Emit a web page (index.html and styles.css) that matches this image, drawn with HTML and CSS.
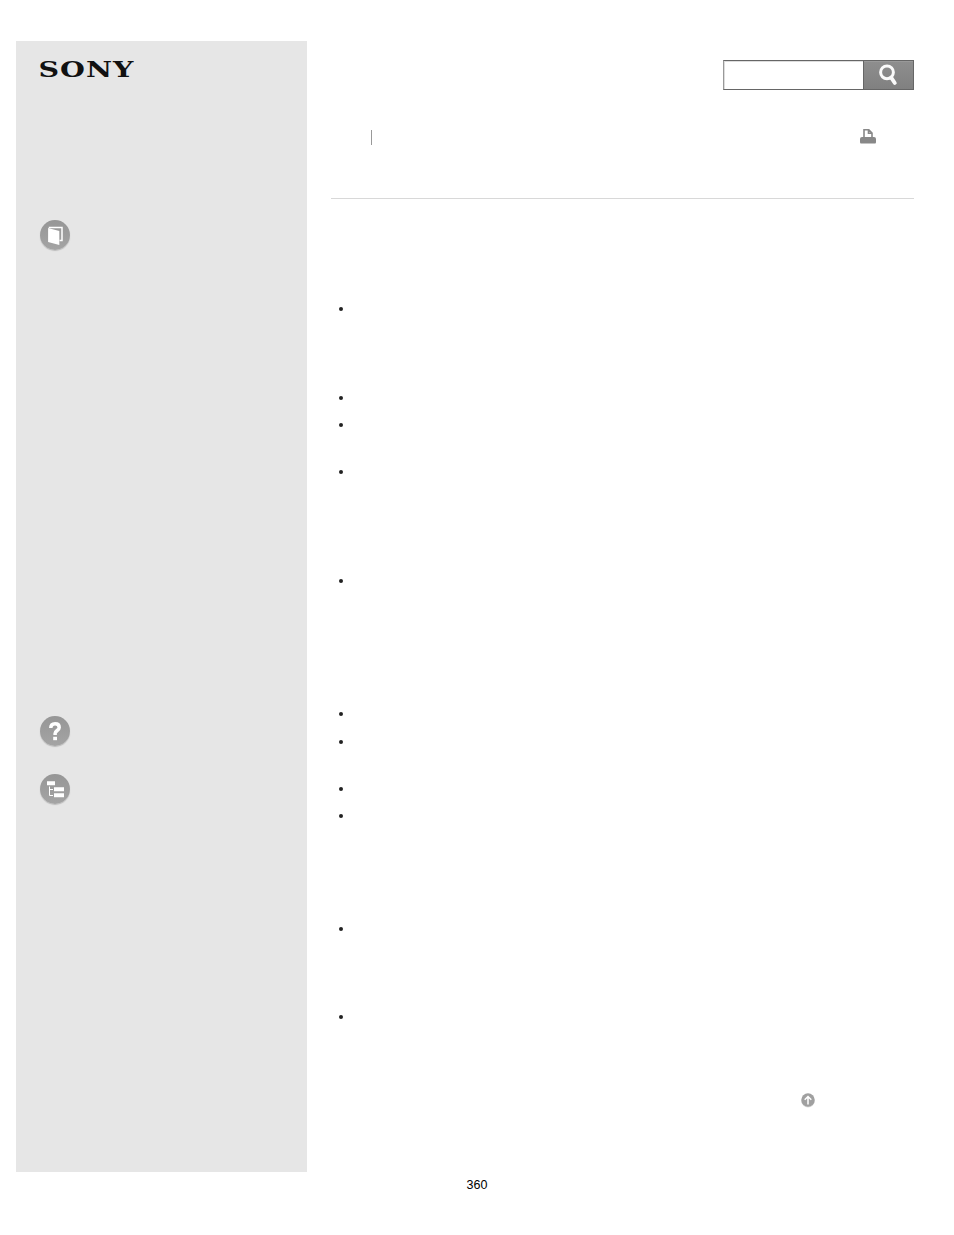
FILE: index.html
```html
<!DOCTYPE html>
<html lang="en">

<head>
  <meta charset="UTF-8">
  <title>SONY</title>
  <link rel="stylesheet" href="styles.css">
</head>

<body>
  <div class="wrapper">
    <div class="side">
      <svg class="logo" width="110" height="32" viewBox="0 0 110 32">
        <text x="-0.6" y="23.2" textLength="96" lengthAdjust="spacingAndGlyphs">SONY</text>
      </svg>

      <div class="side-icon guide">
        <svg width="30" height="30" viewBox="0 0 30 30">
          <path d="M8.8 7.5H22V20.5H19.5" fill="none" stroke="#fff" stroke-width="1.5" />
          <path d="M8.1 8L19.3 11V25L8.1 22Z" fill="#fff" />
        </svg>
      </div>
      <div class="side-icon faq">
        <svg width="30" height="30" viewBox="0 0 30 30">
          <path d="M10.8 12C10.8 9 12.4 7.7 15.1 7.7C17.8 7.7 19.2 9.2 19.2 11.4C19.2 14.4 15.1 14.6 15.1 17.5V19" fill="none" stroke="#fff" stroke-width="3.5" />
          <rect x="13.2" y="20.8" width="3.8" height="3.4" fill="#fff" />
        </svg>
      </div>
      <div class="side-icon list">
        <svg width="30" height="30" viewBox="0 0 30 30">
          <path d="M7 7.2H15V11.2H7ZM14 13.3H24V17.3H14ZM14 19.3H24V23.3H14Z" fill="#fff" />
          <path d="M9.5 12.5V21.5H13M9.5 15.5H13" fill="none" stroke="#fff" />
        </svg>
      </div>
    </div>

    <div class="main">
      <form class="search">
        <input type="text" aria-label="Search">
        <button type="button" aria-label="Search">
          <svg width="20" height="22" viewBox="0 0 20 22">
            <circle cx="8" cy="8.3" r="6.4" fill="none" stroke="#fafafa" stroke-width="3" />
            <path d="M12.2 13.6L15.8 19" stroke="#fafafa" stroke-width="3.8" stroke-linecap="round" />
          </svg>
        </button>
      </form>

      <div class="tools">
        <span class="divider"></span>
        <svg class="print" width="16" height="16" viewBox="0 0 16 16">
          <path d="M4 9V1.7H8.8L12 5V9M8.5 2V5.3H12" fill="none" stroke="#888" stroke-width="1.6" />
          <path d="M2 9H14Q16 9 16 11V14Q16 15.5 15 15.5H1Q0 15.5 0 14V11Q0 9 2 9Z" fill="#888" />
        </svg>
      </div>

      <div class="content">
        <ul>
          <li></li>
        </ul>
        <ul class="notes">
          <li></li>
          <li class="double"></li>
          <li></li>
        </ul>
        <ul class="hint">
          <li></li>
        </ul>
        <ul class="steps">
          <li></li>
          <li class="double"></li>
          <li></li>
          <li></li>
        </ul>
        <ul class="details">
          <li></li>
        </ul>
        <ul class="related">
          <li></li>
        </ul>
      </div>

      <div class="to-top">
        <svg width="14" height="15" viewBox="0 0 14 15">
          <circle cx="7" cy="7.8" r="6.8" fill="#ddd" />
          <circle cx="7" cy="7" r="6.7" fill="#a0a0a0" />
          <path d="M7 11.5V3.7M3.7 6.8L7 3.5L10.3 6.8" fill="none" stroke="#fff" stroke-width="1.5" />
        </svg>
      </div>
    </div>
  </div>

  <div class="page-number">360</div>
</body>

</html>
```

FILE: styles.css
```css
body {
  margin: 0;
  background-color: #fff;
  font-family: "Liberation Sans", Arial, sans-serif;
}

.wrapper {
  display: flex;
  width: 898px;
  height: 1131px;
  margin: 41px 0 0 16px;
}

.side {
  display: flex;
  flex-direction: column;
  box-sizing: border-box;
  width: 291px;
  padding: 13px 0 0 23px;
  background-color: #e6e6e6;
}

.logo {
  display: block;
  overflow: visible;
}

.logo text {
  font-family: "DejaVu Serif", serif;
  font-size: 22.5px;
  font-weight: bold;
  letter-spacing: 0.8px;
  fill: #111;
}

.side-icon {
  width: 30px;
  height: 30px;
  margin-left: 1px;
  border-radius: 50%;
  background: linear-gradient(#969696, #a4a4a4);
  box-shadow: 0 1px 1px #bbb;
}

.side-icon svg {
  display: block;
}

.guide {
  margin-top: 134px;
}

.faq {
  margin-top: 466px;
}

.list {
  margin-top: 28px;
}

.main {
  width: 583px;
  margin-left: 24px;
  padding-top: 19px;
}

.search {
  display: flex;
  justify-content: flex-end;
  height: 30px;
}

.search input {
  box-sizing: border-box;
  width: 140px;
  padding: 0 6px;
  border: 1px solid #666;
  border-left-color: #999;
  border-right: none;
  border-radius: 0;
  box-shadow: inset 1px 1px 0 #ddd;
}

.search button {
  box-sizing: border-box;
  width: 51px;
  padding: 0 0 0 15px;
  border: 1px solid #666;
  background: linear-gradient(#8e8e8e, #808080);
  box-shadow: inset 0 1px 0 #999;
}

.search svg {
  display: block;
}

.tools {
  display: flex;
  justify-content: space-between;
  box-sizing: border-box;
  height: 109px;
  padding: 38px 38px 0 40px;
  border-bottom: 1px solid #d8d8d8;
}

.divider {
  width: 1px;
  height: 15px;
  margin-top: 2px;
  background-color: #999;
}

.content {
  padding-top: 100.4px;
}

ul {
  margin: 0;
  padding: 0 0 0 8px;
  list-style: none;
}

li {
  display: flex;
  height: 20px;
}

li + li {
  margin-top: 7.3px;
}

li.double {
  height: 40px;
}

li::before {
  content: "";
  width: 4px;
  height: 4px;
  margin-top: 8px;
  border-radius: 50%;
  background-color: #222;
}

.notes {
  margin-top: 68.5px;
}

.hint {
  margin-top: 89px;
}

.steps {
  margin-top: 113px;
}

.details {
  margin-top: 92.5px;
}

.related {
  margin-top: 68.5px;
}

.to-top {
  margin-top: 66px;
  padding-left: 470px;
}

.to-top svg {
  display: block;
}

.page-number {
  margin-top: 6px;
  text-align: center;
  font-size: 12.5px;
  line-height: 15px;
  color: #000;
}
```
